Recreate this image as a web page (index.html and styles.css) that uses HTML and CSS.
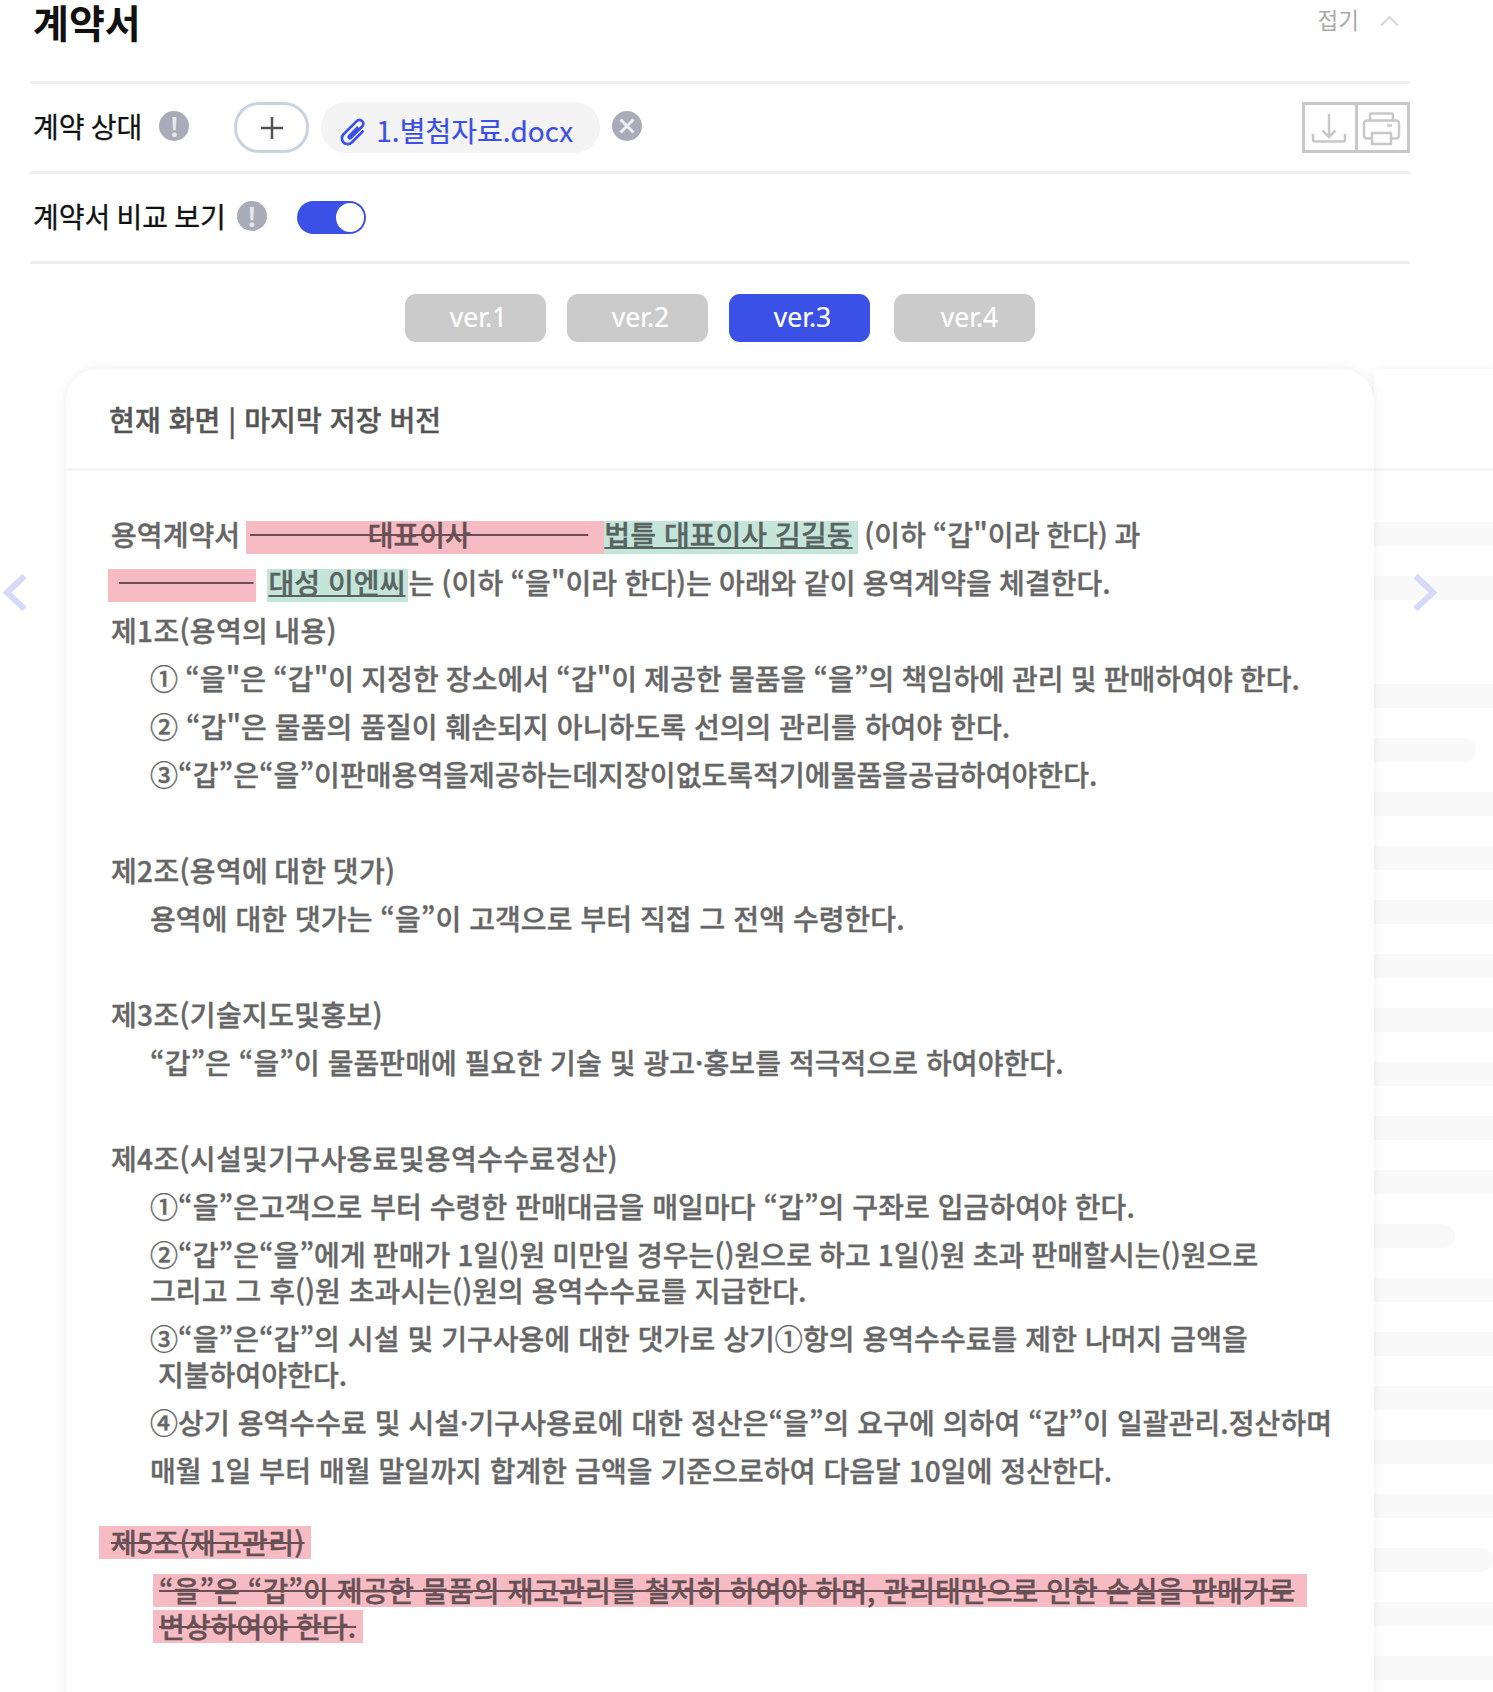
FILE: index.html
```html
<!DOCTYPE html>
<html lang="ko">
<head>
<meta charset="utf-8">
<title>계약서</title>
<link rel="stylesheet" href="styles.css">
</head>
<body>
<main class="page">
  <header class="title-row">
    <h1 class="title">계약서</h1>
    <button class="collapse"><span>접기</span>
      <svg class="collapse-icon" viewBox="0 0 19 10"><path d="M1 9.5 9.5 1 18 9.5"/></svg>
    </button>
  </header>
  <section class="row">
    <span class="label">계약 상대</span>
    <span class="info">!</span>
    <button class="add"><svg viewBox="0 0 22 22"><path d="M11 0v22M0 11h22"/></svg></button>
    <span class="file">
      <svg class="clip" viewBox="0 0 28 28"><path transform="rotate(45 14 14)" d="M18.5 8V21a4.5 4.5 0 0 1-9 0V6.5a3 3 0 0 1 6 0V19a1 1 0 0 1-2 0V9"/></svg>
      <span class="file-name">1.별첨자료.docx</span>
    </span>
    <button class="remove"><svg viewBox="0 0 30 30"><path d="M8.5 8.5l13 13M21.5 8.5l-13 13"/></svg></button>
    <span class="tools">
      <span class="tool"><svg viewBox="0 0 36 36"><path d="M17 4v23M10.5 20.5 17 27l6.5-6.5M1 24v5.5a2 2 0 0 0 2 2h28a2 2 0 0 0 2-2V24"/></svg></span>
      <span class="tool tool-print"><svg viewBox="0 0 36 36"><path d="M7 10.5v-6a1 1 0 0 1 1-1h21a1 1 0 0 1 1 1v6M9 28.5H4a3 3 0 0 1-3-3v-12a3 3 0 0 1 3-3h29a3 3 0 0 1 3 3v12a3 3 0 0 1-3 3h-5M9 23h19v11H9zM24 15.5h5"/></svg></span>
    </span>
  </section>
  <section class="row">
    <span class="label">계약서 비교 보기</span>
    <span class="info info-tight">!</span>
    <span class="toggle"><span class="knob"></span></span>
  </section>
  <nav class="versions">
    <button class="ver">ver.1</button>
    <button class="ver">ver.2</button>
    <button class="ver ver-on">ver.3</button>
    <button class="ver ver-last">ver.4</button>
  </nav>
  <div class="stage">
    <article class="card">
      <div class="card-head">현재 화면 | 마지막 저장 버전</div>
      <div class="doc">
        <p>용역계약서 <span class="del del-wide">&nbsp;&nbsp;&nbsp;&nbsp;&nbsp;&nbsp;&nbsp;&nbsp;&nbsp;&nbsp;&nbsp;&nbsp;&nbsp;&nbsp;&nbsp;대표이사&nbsp;&nbsp;&nbsp;&nbsp;&nbsp;&nbsp;&nbsp;&nbsp;&nbsp;&nbsp;&nbsp;&nbsp;&nbsp;&nbsp;&nbsp;</span><span class="ins">법틀 대표이사 김길동</span><span class="tail-a"> (이하 “갑"이라 한다) 과</span></p>
        <p class="shift"><span class="del del-blank">&nbsp;&nbsp;&nbsp;&nbsp;&nbsp;&nbsp;&nbsp;&nbsp;&nbsp;&nbsp;&nbsp;&nbsp;&nbsp;&nbsp;&nbsp;&nbsp;&nbsp;</span> <span class="ins ins-tight">대성 이엔씨</span><span class="tail-b">는 (이하 “을"이라 한다)는 아래와 같이 용역계약을 체결한다.</span></p>
        <p class="head">제1조(용역의 내용)</p>
        <p class="sub tight">① “을"은 “갑"이 지정한 장소에서 “갑"이 제공한 물품을 “을”의 책임하에 관리 및 판매하여야 한다.</p>
        <p class="sub">② “갑"은 물품의 품질이 훼손되지 아니하도록 선의의 관리를 하여야 한다.</p>
        <p class="sub">③“갑”은“을”이판매용역을제공하는데지장이없도록적기에물품을공급하여야한다.</p>
        <p class="head gap">제2조(용역에 대한 댓가)</p>
        <p class="sub">용역에 대한 댓가는 “을”이 고객으로 부터 직접 그 전액 수령한다.</p>
        <p class="head gap">제3조(기술지도및홍보)</p>
        <p class="sub">“갑”은 “을”이 물품판매에 필요한 기술 및 광고·홍보를 적극적으로 하여야한다.</p>
        <p class="head gap">제4조(시설및기구사용료및용역수수료정산)</p>
        <p class="sub">①“을”은고객으로 부터 수령한 판매대금을 매일마다 “갑”의 구좌로 입금하여야 한다.</p>
        <p class="sub"><span class="tight">②“갑”은“을”에게 판매가 1일()원 미만일 경우는()원으로 하고 1일()원 초과 판매할시는()원으로</span><br>그리고 그 후()원 초과시는()원의 용역수수료를 지급한다.</p>
        <p class="sub">③“을”은“갑”의 시설 및 기구사용에 대한 댓가로 상기①항의 용역수수료를 제한 나머지 금액을<br>&nbsp;지불하여야한다.</p>
        <p class="sub">④상기 용역수수료 및 시설·기구사용료에 대한 정산은“을”의 요구에 의하여 “갑”이 일괄관리.정산하며</p>
        <p class="sub">매월 1일 부터 매월 말일까지 합계한 금액을 기준으로하여 다음달 10일에 정산한다.</p>
        <p class="head gap-small"><span class="del del-head">제5조(재고관리)</span></p>
        <p class="sub del-block"><span class="del del-para">“을”은 “갑”이 제공한 물품의 재고관리를 철저히 하여야 하며, 관리태만으로 인한 손실을 판매가로</span><br><span class="del del-para-end">변상하여야 한다.</span></p>
      </div>
    </article>
    <aside class="card-next">
      <div class="next-head"></div>
      <div class="stripes">
        <i class="stripe"></i><i class="stripe"></i><i class="stripe stripe-none"></i><i class="stripe"></i><i class="stripe stripe-a"></i><i class="stripe"></i><i class="stripe"></i><i class="stripe"></i><i class="stripe"></i><i class="stripe"></i><i class="stripe"></i><i class="stripe"></i><i class="stripe"></i><i class="stripe stripe-b"></i><i class="stripe"></i><i class="stripe"></i><i class="stripe"></i><i class="stripe"></i><i class="stripe"></i><i class="stripe stripe-c"></i><i class="stripe"></i><i class="stripe"></i>
      </div>
    </aside>
    <svg class="chev chev-left" viewBox="0 0 25 37"><path d="M22.5 2 5 18.5 22.5 35"/></svg>
    <svg class="chev chev-right" viewBox="0 0 25 37"><path d="M2.5 2 20 18.5 2.5 35"/></svg>
  </div>
</main>
</body>
</html>
```

FILE: styles.css
```css
* { box-sizing: border-box; }
html, body { margin: 0; padding: 0; background: #fff; }
body {
  height: 1692px;
  overflow: hidden;
  font-family: "Noto Sans CJK KR", "Noto Sans", sans-serif;
  color: #111;
}
button { font: inherit; border: 0; padding: 0; background: none; }
.page { width: 1493px; }

.title-row {
  margin: 0 83px 0 30px;
  height: 81px;
  display: flex;
  justify-content: space-between;
  align-items: flex-start;
}
.title {
  margin: 0 0 0 3px;
  font-size: 39px;
  line-height: 42px;
  font-weight: 700;
  color: #111;
}
.collapse {
  display: flex;
  align-items: center;
  gap: 21px;
  color: #aaa;
  font-size: 22.5px;
  line-height: 38px;
  margin-right: 11px;
}
.collapse-icon { width: 19px; height: 10px; fill: none; stroke: #ddd; stroke-width: 2.5; margin-top: 4px; }

.row {
  margin: 0 83px 0 30px;
  height: 90px;
  padding: 18px 0 0 3px;
  border-top: 3px solid #eee;
  display: flex;
  align-items: flex-start;
}
.label {
  font-size: 28px;
  line-height: 49px;
  color: #111;
  word-spacing: -1.6px;
  -webkit-text-stroke: .3px currentColor;
}
.info {
  width: 30px;
  height: 30px;
  margin: 9px 0 0 17px;
  border-radius: 50%;
  background: #a9abb8;
  color: #e8e8ec;
  font-size: 26px;
  font-weight: 700;
  line-height: 30px;
  text-align: center;
}
.info-tight { margin-left: 11px; }
.add {
  width: 75px;
  height: 51px;
  margin-left: 45px;
  border: 3px solid #c9d4e3;
  border-radius: 25px;
  display: flex;
  align-items: center;
  justify-content: center;
}
.add svg { width: 22px; height: 22px; fill: none; stroke: #555; stroke-width: 2.5; }
.file {
  height: 51px;
  margin-left: 12px;
  width: 279px;
  padding-left: 15px;
  border-radius: 25px;
  background: #f4f4f5;
  display: flex;
  align-items: center;
  color: #3a50e6;
}
.clip { flex: none; width: 36px; height: 36px; fill: none; stroke: #3a50e6; stroke-width: 2.1; transform: translateY(4px); }
.file-name { font-size: 28px; line-height: 51px; margin-left: 4px; padding-top: 6px; white-space: nowrap; -webkit-text-stroke: .2px currentColor; }
.remove { width: 30px; height: 30px; margin: 9px 0 0 12px; border-radius: 50%; background: #a9abb8; }
.remove svg { display: block; width: 30px; height: 30px; fill: none; stroke: #eee; stroke-width: 3; }
.tools { margin-left: auto; display: flex; border: 3px solid #c8c8c8; height: 51px; width: 108px; }
.tool { flex: 1; display: flex; align-items: center; justify-content: center; }
.tool + .tool { border-left: 3px solid #c8c8c8; }
.tool svg { width: 36px; height: 36px; fill: none; stroke: #c8c8c8; stroke-width: 2.5; overflow: visible; }
.tool-print svg { margin-left: -3px; }

.toggle {
  width: 69px;
  height: 33px;
  margin: 9px 0 0 30px;
  border-radius: 17px;
  background: #3a50e6;
  padding: 2px;
  display: flex;
  justify-content: flex-end;
}
.knob { width: 28px; height: 29px; border-radius: 50%; background: #fff; }

.versions {
  margin: 0 83px 0 30px;
  border-top: 3px solid #eee;
  padding: 30px 0 0 375px;
  display: flex;
  gap: 21px;
  height: 96px;
}
.ver {
  width: 141px;
  height: 48px;
  border-radius: 11px;
  background: #cbcbcb;
  color: #fff;
  font-family: "Noto Sans", sans-serif;
  font-size: 26.5px;
  padding: 0 0 2px 6px;
  -webkit-text-stroke: .2px currentColor;
}
.ver-on { background: #3a50e6; }
.ver-last { margin-left: 3px; padding-left: 10px; }

.stage {
  position: relative;
  display: flex;
  height: 1335px;
  overflow: hidden;
  padding: 12px 0 0 66px;
}
.card {
  flex: none;
  width: 1308px;
  height: 1400px;
  border-radius: 32px 32px 0 0;
  background: #fff;
  box-shadow: 0 0 12px rgba(0,0,0,.08);
  position: relative;
  z-index: 1;
}
.card-head {
  height: 102px;
  padding: 0 0 0 43px;
  border-bottom: 3px solid #f5f5f5;
  font-size: 28px;
  line-height: 100px;
  font-weight: 500;
  color: #555;
  word-spacing: -.3px;
  letter-spacing: .2px;
  -webkit-text-stroke: .45px currentColor;
}
.doc {
  padding: 45px 0 0 45px;
  font-size: 28px;
  line-height: 36px;
  font-weight: 500;
  color: #666;
  letter-spacing: .07px;
  white-space: nowrap;
  -webkit-text-stroke: .4px currentColor;
}
.doc p { margin: 0 0 12px; }
.doc .shift { margin-left: -3px; }
.doc .sub { padding-left: 39px; }
.doc .head { letter-spacing: .35px; word-spacing: -2px; }
.doc .tight { word-spacing: -.8px; }
.doc .gap { margin-top: 60px; }
.doc .gap-small { margin-top: 36px; }
.tail-a { word-spacing: -1.2px; }
.tail-b { word-spacing: -.7px; }

.del, .ins {
  --o: 4px;
  background-image: linear-gradient(transparent var(--o), var(--hl) var(--o), var(--hl) calc(var(--o) + 33px), transparent calc(var(--o) + 33px));
}
.del { --hl: #f7bcc3; text-decoration: line-through; text-decoration-color: #6a5055; text-decoration-thickness: 2px; color: #665055; }
.ins { --hl: #c5e5da; --o: 7px; text-decoration: underline; text-decoration-thickness: 2px; color: #58645f; padding-right: 5px; }
.del-wide { --o: 7px; padding: 0 16px 0 4px; margin-left: -2px; letter-spacing: 0; }
.del-blank { --o: 7px; padding: 0 3px 0 11px; margin-right: 3px; }
.ins-tight { padding-left: 1px; padding-right: 3px; }
.del-head { padding: 0 6px 0 12px; margin-left: -12px; }
.del-block { margin-left: 3px !important; }
.del-para { padding: 0 12px 0 6px; }
.del-para-end { padding: 0 7px 0 6px; }

.card-next {
  flex: none;
  width: 119px;
  height: 1400px;
  background: #fff;
  box-shadow: 0 0 9px rgba(0,0,0,.06);
}
.next-head { height: 102px; border-bottom: 3px solid #f5f5f5; }
.stripes { padding-top: 51px; display: flex; flex-direction: column; gap: 30px; }
.stripe { display: block; height: 24px; background: #f9f9f9; flex: none; }
.stripe-none { background: none; }
.stripe-a { width: 102px; border-radius: 0 12px 12px 0; }
.stripe-b { width: 81px; border-radius: 0 12px 12px 0; }
.stripe-c { border-radius: 0 12px 12px 0; }

.chev { position: absolute; z-index: 2; top: 217px; width: 25px; height: 37px; fill: none; stroke: #d5daf7; stroke-width: 6; }
.chev-left { left: 2px; }
.chev-right { left: 1413px; }
```
